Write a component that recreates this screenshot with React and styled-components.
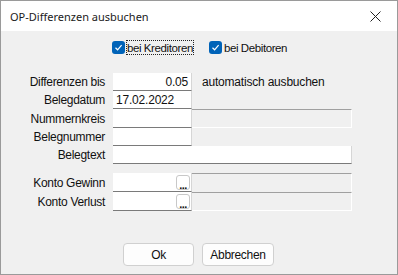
import React from "react";
import styled, { createGlobalStyle } from "styled-components";

const GlobalStyle = createGlobalStyle`
  html, body {
    margin: 0;
    padding: 0;
    background: #f0f0f0;
  }
  * {
    box-sizing: border-box;
  }
`;

const Window = styled.div`
  width: 398px;
  height: 275px;
  border: 1px solid #9a9a9a;
  background: #f0f0f0;
  display: flex;
  flex-direction: column;
  font-family: "Liberation Sans", Arial, sans-serif;
  font-size: 12px;
  color: #111;
`;

const TitleBar = styled.div`
  height: 30px;
  background: #fff;
  display: flex;
  align-items: center;
  justify-content: space-between;
  padding: 0 16px 0 9px;
  font-family: "Noto Sans", "Open Sans", sans-serif;
  font-size: 11px;
  color: #1a1a1a;
`;

const Body = styled.div`
  flex: 1;
  display: flex;
  flex-direction: column;
  padding-top: 9px;
`;

const CheckRow = styled.div`
  display: flex;
  justify-content: center;
  align-items: center;
  gap: 15px;
  height: 15px;
  padding-left: 2px;
`;

const CheckItem = styled.label`
  display: flex;
  align-items: center;
  gap: 1px;
`;

const Box = styled.span`
  width: 13px;
  height: 13px;
  border-radius: 3px;
  background: #0063b8;
  display: flex;
  align-items: center;
  justify-content: center;
`;

const CheckText = styled.span`
  padding: 0;
  height: 15px;
  line-height: 14px;
  font-size: 11.5px;
  letter-spacing: -0.4px;
  border: 1px dotted ${(p) => (p.$focus ? "#222" : "transparent")};
`;

const Form = styled.div`
  display: flex;
  flex-direction: column;
  margin-top: 18px;
`;

const Group = styled.div`
  display: flex;
  flex-direction: column;
  margin-top: ${(p) => p.$gap || 0}px;
`;

const Row = styled.div`
  display: flex;
  align-items: center;
  height: ${(p) => p.$h || 18}px;
`;

const Label = styled.div`
  width: 104px;
  margin-right: 8px;
  text-align: right;
  letter-spacing: -0.3px;
`;

const Field = styled.div`
  position: relative;
  width: ${(p) => p.$w || 79}px;
  height: 100%;
  background: #fff;
  border-bottom: 1px solid #7a7a7a;
  border-right: 1px solid #d6d6d6;
  display: flex;
  align-items: center;
  justify-content: ${(p) => (p.$right ? "flex-end" : "flex-start")};
  padding: 0 3px 0 3px;
  letter-spacing: -0.2px;
`;

const Panel = styled.div`
  width: 160px;
  height: 100%;
  border-top: 1px solid #a0a0a0;
  border-right: 1px solid #fff;
  border-bottom: 1px solid ${(p) => (p.$last ? "#fff" : "transparent")};
`;

const Note = styled.span`
  margin-left: 10px;
  letter-spacing: -0.2px;
`;

const Dots = styled.button`
  position: absolute;
  right: 1px;
  top: 2px;
  width: 14px;
  height: 15px;
  padding: 0;
  border: 1px solid #c8c8c8;
  border-radius: 3px;
  background: #fff;
  font-family: "Liberation Sans", Arial, sans-serif;
  font-size: 11px;
  font-weight: bold;
  line-height: 18px;
  color: #111;
  text-align: center;
  letter-spacing: -0.5px;
`;

const Buttons = styled.div`
  display: flex;
  justify-content: center;
  gap: 8px;
  margin-top: 32px;
  padding-right: 1px;
`;

const Button = styled.button`
  width: ${(p) => p.$w}px;
  height: 23px;
  border: 1px solid #d0d0d0;
  border-radius: 4px;
  background: #fdfdfd;
  font-family: "Liberation Sans", Arial, sans-serif;
  font-size: 12px;
  letter-spacing: -0.3px;
  color: #111;
  padding: 0;
`;

const Check = () => (
  <Box>
    <svg width="9" height="9" viewBox="0 0 9 9">
      <path d="M1.5 4.8 L3.6 6.8 L7.6 2.2" fill="none" stroke="#fff" strokeWidth="1.2" />
    </svg>
  </Box>
);

const Close = () => (
  <svg width="11" height="11" viewBox="0 0 11 11">
    <path d="M0.5 0.5 L10.5 10.5 M10.5 0.5 L0.5 10.5" stroke="#222" strokeWidth="1" />
  </svg>
);

export default function App() {
  return (
    <>
      <GlobalStyle />
      <Window>
        <TitleBar>
          <span>OP-Differenzen ausbuchen</span>
          <Close />
        </TitleBar>
        <Body>
          <CheckRow>
            <CheckItem>
              <Check />
              <CheckText $focus>bei Kreditoren</CheckText>
            </CheckItem>
            <CheckItem>
              <Check />
              <CheckText>bei Debitoren</CheckText>
            </CheckItem>
          </CheckRow>
          <Form>
            <Group>
              <Row>
                <Label>Differenzen bis</Label>
                <Field $right>0.05</Field>
                <Note>automatisch ausbuchen</Note>
              </Row>
              <Row>
                <Label>Belegdatum</Label>
                <Field>17.02.2022</Field>
              </Row>
              <Row $h={19}>
                <Label>Nummernkreis</Label>
                <Field />
                <Panel $last />
              </Row>
              <Row>
                <Label>Belegnummer</Label>
                <Field />
              </Row>
              <Row>
                <Label>Belegtext</Label>
                <Field $w={239} />
              </Row>
            </Group>
            <Group $gap={9}>
              <Row $h={19}>
                <Label>Konto Gewinn</Label>
                <Field>
                  <Dots>...</Dots>
                </Field>
                <Panel />
              </Row>
              <Row $h={19}>
                <Label>Konto Verlust</Label>
                <Field>
                  <Dots>...</Dots>
                </Field>
                <Panel $last />
              </Row>
            </Group>
          </Form>
          <Buttons>
            <Button $w={71}>Ok</Button>
            <Button $w={72}>Abbrechen</Button>
          </Buttons>
        </Body>
      </Window>
    </>
  );
}
